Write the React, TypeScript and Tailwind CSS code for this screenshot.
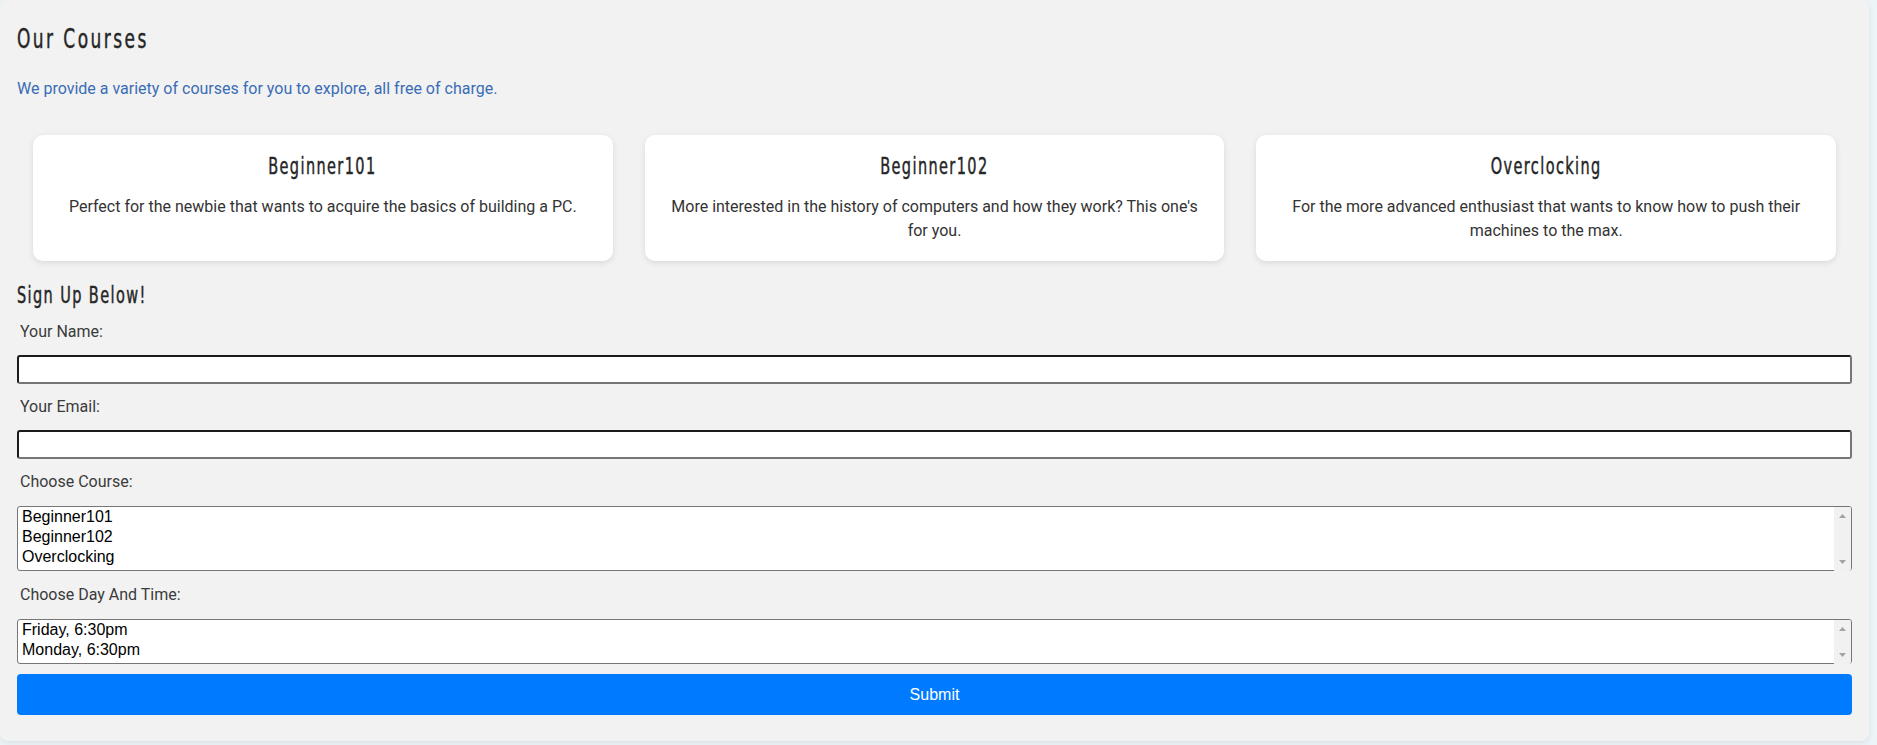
const heading =
  "font-['DejaVu_Sans_Condensed','DejaVu_Sans',sans-serif] text-[#262626] [-webkit-text-stroke:0.45px_#262626]";
const body = "font-['Roboto',sans-serif]";

const courses = [
  {
    title: "Beginner101",
    text: "Perfect for the newbie that wants to acquire the basics of building a PC."
  },
  {
    title: "Beginner102",
    text: "More interested in the history of computers and how they work? This one's for you."
  },
  {
    title: "Overclocking",
    text: "For the more advanced enthusiast that wants to know how to push their machines to the max."
  }
];

const Label = ({ children }: { children: React.ReactNode }) => (
  <label className={`${body} mt-[11px] block pl-[3px] text-[16px] leading-6 text-[#3b3b3b]`}>{children}</label>
);

const fieldCls =
  "mt-[11px] h-[29px] rounded-[3px] border-2 border-t-[#1b1b1b] border-l-[#1b1b1b] border-r-[#767676] border-b-[#767676] bg-white px-1";
const listCls =
  "w-full overflow-y-auto rounded-[3px] border border-[#767676] bg-white px-1 py-[1px] font-['Liberation_Sans',Arial,sans-serif] text-[16px] text-black";

// fake classic scrollbar drawn over the listbox
const ScrollTrack = () => (
  <div className="pointer-events-none absolute top-px right-px bottom-px flex w-[17px] flex-col items-center justify-between rounded-r-[2px] bg-[#f1f1f1] py-[7px]">
    <svg width="7" height="4" viewBox="0 0 7 4">
      <path d="M0 4 L3.5 0 L7 4 Z" fill="#a3a3a3" />
    </svg>
    <svg width="7" height="4" viewBox="0 0 7 4">
      <path d="M0 0 L3.5 4 L7 0 Z" fill="#a3a3a3" />
    </svg>
  </div>
);

export default function App() {
  return (
    <div className="min-h-screen bg-[#edf4f8]">
      <div className="mr-2 rounded-lg bg-[#f2f2f2] px-[17px] pt-[23px] pb-[26px] shadow-[0_2px_6px_rgba(0,0,0,0.08)]">
        <h2 className={`${heading} text-[27px] leading-8`}>
          <span className="inline-block origin-left scale-x-[0.7] tracking-[3.5px]">Our Courses</span>
        </h2>
        <p className={`${body} mt-[22px] text-[16px] leading-6 text-[#3a6db5]`}>
          We provide a variety of courses for you to explore, all free of charge.
        </p>

        <div className="mt-[34px] flex gap-8 px-4">
          {courses.map((c) => (
            <div
              key={c.title}
              className="flex-1 rounded-[10px] bg-white px-5 pt-[17px] pb-[18px] text-center shadow-[0_2px_6px_rgba(0,0,0,0.1)]"
            >
              <h3 className={`${heading} text-[23px] leading-7`}>
                <span className="inline-block origin-center scale-x-[0.7] tracking-[2px]">{c.title}</span>
              </h3>
              <p className={`${body} mt-[15px] text-[16px] leading-6 text-[#333]`}>{c.text}</p>
            </div>
          ))}
        </div>

        <h3 className={`${heading} mt-[20px] text-[23px] leading-7`}>
          <span className="inline-block origin-left scale-x-[0.7] tracking-[2px]">Sign Up Below!</span>
        </h3>

        <form className="flex flex-col" onSubmit={(e) => e.preventDefault()}>
          <Label>Your Name:</Label>
          <input type="text" className={fieldCls} />
          <Label>Your Email:</Label>
          <input type="email" className={fieldCls} />
          <Label>Choose Course:</Label>
          <div className="relative mt-3">
            <select size={3} className={`${listCls} h-[65px]`}>
              <option className="h-5">Beginner101</option>
              <option className="h-5">Beginner102</option>
              <option className="h-5">Overclocking</option>
            </select>
            <ScrollTrack />
          </div>
          <Label>Choose Day And Time:</Label>
          <div className="relative mt-3">
            <select size={2} className={`${listCls} h-[45px]`}>
              <option className="h-5">Friday, 6:30pm</option>
              <option className="h-5">Monday, 6:30pm</option>
            </select>
            <ScrollTrack />
          </div>
          <button
            type="submit"
            className="mt-[9px] h-[41px] rounded-[4px] bg-[#007bff] font-['Liberation_Sans',Arial,sans-serif] text-[16px] text-white"
          >
            Submit
          </button>
        </form>
      </div>
    </div>
  );
}
